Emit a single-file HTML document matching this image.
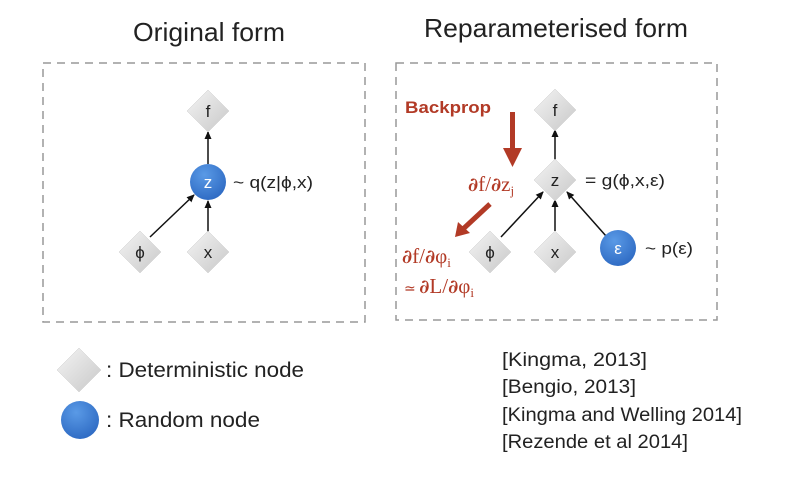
<!DOCTYPE html>
<html><head><meta charset="utf-8"><style>
html,body{margin:0;padding:0;background:#fff;}
svg{display:block;}
.d{font-family:"DejaVu Serif",serif;font-weight:bold;font-size:19px;}
</style></head><body>
<svg width="800" height="486" viewBox="0 0 800 486" xmlns="http://www.w3.org/2000/svg" font-family="Liberation Sans, sans-serif">
<defs>
<linearGradient id="dg" x1="0" y1="0" x2="1" y2="1">
<stop offset="0" stop-color="#f4f4f4"/><stop offset="1" stop-color="#c8c8c8"/>
</linearGradient>
<radialGradient id="bg" cx="0.4" cy="0.3" r="0.8">
<stop offset="0" stop-color="#5a9ae6"/><stop offset="1" stop-color="#2a66c0"/>
</radialGradient>
<marker id="ah" markerWidth="8" markerHeight="8" refX="7" refY="4" orient="auto" markerUnits="userSpaceOnUse">
<path d="M0,0.5 L8,4 L0,7.5 Z" fill="#111"/>
</marker>
</defs>
<rect width="800" height="486" fill="#fff"/>
<text x="133" y="41" font-size="26" fill="#222" textLength="152" lengthAdjust="spacingAndGlyphs">Original form</text>
<text x="424" y="37" font-size="26" fill="#222" textLength="264" lengthAdjust="spacingAndGlyphs">Reparameterised form</text>
<rect x="43" y="63" width="322" height="259" fill="none" stroke="#999" stroke-width="1.5" stroke-dasharray="8,6"/>
<rect x="396" y="63" width="321" height="257" fill="none" stroke="#999" stroke-width="1.5" stroke-dasharray="8,6"/>

<line x1="208" y1="164" x2="208" y2="132" stroke="#111" stroke-width="1.5" marker-end="url(#ah)"/>
<line x1="150" y1="237" x2="194" y2="195" stroke="#111" stroke-width="1.5" marker-end="url(#ah)"/>
<line x1="208" y1="232" x2="208" y2="201" stroke="#111" stroke-width="1.5" marker-end="url(#ah)"/>
<g fill="url(#dg)" stroke="#ccc" stroke-width="0.5">
<polygon points="208,90 229,111 208,132 187,111"/>
<polygon points="140,231 161,252 140,273 119,252"/>
<polygon points="208,231 229,252 208,273 187,252"/>
</g>
<circle cx="208" cy="182" r="18" fill="url(#bg)"/>
<g font-size="17" fill="#222" text-anchor="middle">
<text x="208" y="117">f</text>
<text x="208" y="188" fill="#fff">z</text>
<text x="140" y="258">ϕ</text>
<text x="208" y="258">x</text>
</g>
<text x="233" y="188" font-size="17" fill="#222" textLength="80" lengthAdjust="spacingAndGlyphs">~ q(z|ϕ,x)</text>

<line x1="555" y1="160" x2="555" y2="130" stroke="#111" stroke-width="1.5" marker-end="url(#ah)"/>
<line x1="501" y1="237" x2="543" y2="192" stroke="#111" stroke-width="1.5" marker-end="url(#ah)"/>
<line x1="555" y1="231" x2="555" y2="200" stroke="#111" stroke-width="1.5" marker-end="url(#ah)"/>
<line x1="606" y1="236" x2="567" y2="192" stroke="#111" stroke-width="1.5" marker-end="url(#ah)"/>
<g fill="url(#dg)" stroke="#ccc" stroke-width="0.5">
<polygon points="555,89 576,110 555,131 534,110"/>
<polygon points="555,159 576,180 555,201 534,180"/>
<polygon points="490,231 511,252 490,273 469,252"/>
<polygon points="555,231 576,252 555,273 534,252"/>
</g>
<circle cx="618" cy="248" r="18" fill="url(#bg)"/>
<g font-size="17" fill="#222" text-anchor="middle">
<text x="555" y="116">f</text>
<text x="555" y="186">z</text>
<text x="490" y="258">ϕ</text>
<text x="555" y="258">x</text>
<text x="618" y="254" fill="#fff">ε</text>
</g>
<text x="585" y="186" font-size="17" fill="#222" textLength="80" lengthAdjust="spacingAndGlyphs">= g(ϕ,x,ε)</text>
<text x="645" y="254" font-size="17" fill="#222" textLength="48" lengthAdjust="spacingAndGlyphs">~ p(ε)</text>

<g fill="#b23a26">
<text x="405" y="113" font-size="17" font-weight="bold" textLength="86" lengthAdjust="spacingAndGlyphs">Backprop</text>
<rect x="510" y="112" width="5" height="38"/>
<polygon points="503,148 522,148 512.5,167"/>
<line x1="490" y1="204" x2="462" y2="230" stroke="#b23a26" stroke-width="5"/>
<polygon points="455,237 458,222 470,233"/>
<text x="468" y="191" font-size="21" font-family="Liberation Serif, serif"><tspan class="d">∂</tspan>f/<tspan class="d">∂</tspan>z<tspan font-size="13" dy="4">j</tspan></text>
<text x="402" y="263" font-size="21" font-family="Liberation Serif, serif"><tspan class="d">∂</tspan>f/<tspan class="d">∂</tspan>φ<tspan font-size="13" dy="4">i</tspan></text>
<text x="404" y="293" font-size="21" font-family="Liberation Serif, serif"><tspan font-size="14">≃ </tspan><tspan class="d">∂</tspan>L/<tspan class="d">∂</tspan>φ<tspan font-size="13" dy="4">i</tspan></text>
</g>

<polygon points="79,348 101,370 79,392 57,370" fill="url(#dg)" stroke="#ccc" stroke-width="0.5"/>
<circle cx="80" cy="420" r="19" fill="url(#bg)"/>
<text x="106" y="377" font-size="21" fill="#222" textLength="198" lengthAdjust="spacingAndGlyphs">: Deterministic node</text>
<text x="106" y="427" font-size="21" fill="#222" textLength="154" lengthAdjust="spacingAndGlyphs">: Random node</text>

<g font-size="19" fill="#222">
<text x="502" y="366" textLength="145" lengthAdjust="spacingAndGlyphs">[Kingma, 2013]</text>
<text x="502" y="393" textLength="134" lengthAdjust="spacingAndGlyphs">[Bengio, 2013]</text>
<text x="502" y="421" textLength="240" lengthAdjust="spacingAndGlyphs">[Kingma and Welling 2014]</text>
<text x="502" y="448" textLength="186" lengthAdjust="spacingAndGlyphs">[Rezende et al 2014]</text>
</g>
</svg>
</body></html>
